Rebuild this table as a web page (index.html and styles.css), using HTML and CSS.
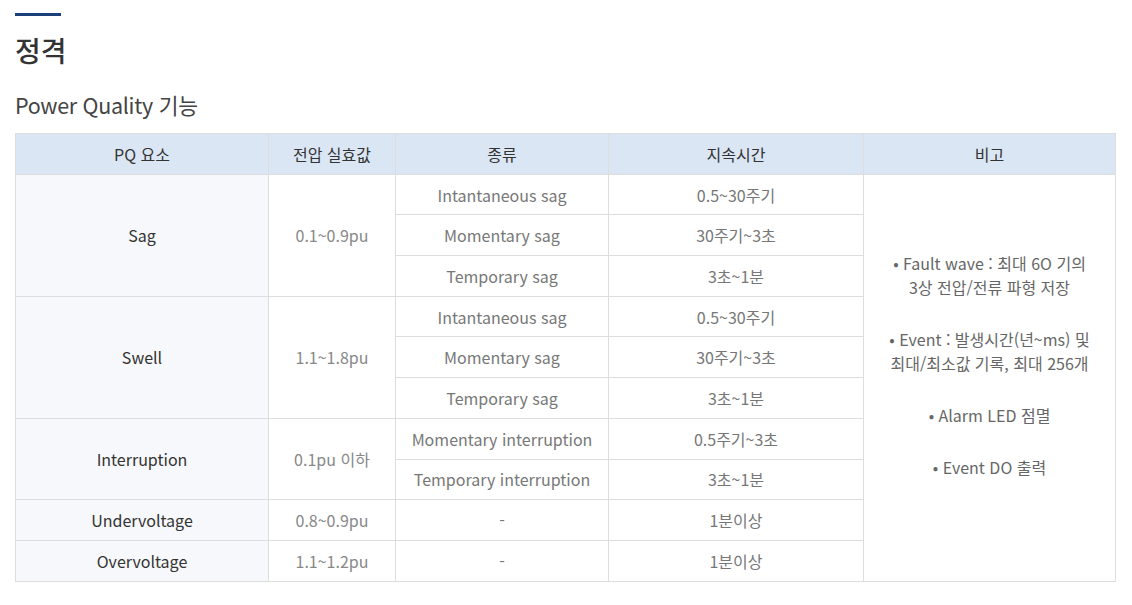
FILE: index.html
```html
<!DOCTYPE html>
<html lang="ko">
<head>
<meta charset="utf-8">
<link rel="stylesheet" href="styles.css">
</head>
<body>
<div class="page">
  <div class="bar"></div>
  <h2 class="title">정격</h2>
  <h3 class="subtitle">Power Quality 기능</h3>
  <table class="spec">
    <colgroup>
      <col class="c1"><col class="c2"><col class="c3"><col class="c4"><col class="c5">
    </colgroup>
    <thead>
      <tr><th>PQ 요소</th><th>전압 실효값</th><th>종류</th><th>지속시간</th><th>비고</th></tr>
    </thead>
    <tbody>
      <tr><td class="name" rowspan="3">Sag</td><td class="val" rowspan="3">0.1~0.9pu</td><td>Intantaneous sag</td><td>0.5~30주기</td>
        <td class="note" rowspan="10">
          <p>• Fault wave : 최대 6O 기의<br>3상 전압/전류 파형 저장</p>
          <p>• Event : 발생시간(년~ms) 및<br>최대/최소값 기록, 최대 256개</p>
          <p>• Alarm LED 점멸</p>
          <p>• Event DO 출력</p>
        </td></tr>
      <tr><td>Momentary sag</td><td>30주기~3초</td></tr>
      <tr><td>Temporary sag</td><td>3초~1분</td></tr>
      <tr><td class="name" rowspan="3">Swell</td><td class="val" rowspan="3">1.1~1.8pu</td><td>Intantaneous sag</td><td>0.5~30주기</td></tr>
      <tr><td>Momentary sag</td><td>30주기~3초</td></tr>
      <tr><td>Temporary sag</td><td>3초~1분</td></tr>
      <tr><td class="name" rowspan="2">Interruption</td><td class="val" rowspan="2">0.1pu 이하</td><td>Momentary interruption</td><td>0.5주기~3초</td></tr>
      <tr><td>Temporary interruption</td><td>3초~1분</td></tr>
      <tr><td class="name">Undervoltage</td><td class="val">0.8~0.9pu</td><td>-</td><td>1분이상</td></tr>
      <tr><td class="name">Overvoltage</td><td class="val">1.1~1.2pu</td><td>-</td><td>1분이상</td></tr>
    </tbody>
  </table>
</div>
</body>
</html>
```
FILE: styles.css
```css
html, body {
  margin: 0;
  padding: 0;
  background: #fff;
}
body {
  font-family: "Noto Sans CJK KR", "Noto Sans", sans-serif;
  color: #333;
}
.page {
  padding: 13px 18px 0 15px;
}
.bar {
  width: 46px;
  height: 3px;
  background: #1a3f7a;
}
.title {
  margin: 15px 0 0;
  font-size: 28px;
  line-height: 38px;
  font-weight: 500;
  color: #333;
}
.subtitle {
  margin: 21px 0 0;
  font-size: 21.5px;
  line-height: 30px;
  font-weight: 400;
  color: #444;
  letter-spacing: -0.3px;
}
.spec {
  margin-top: 13px;
  width: 1100px;
  border-collapse: collapse;
  table-layout: fixed;
  font-size: 16px;
}
.c1 { width: 253px; }
.c2 { width: 127px; }
.c3 { width: 213px; }
.c4 { width: 255px; }
.c5 { width: 252px; }
.spec th, .spec td {
  border: 1px solid #dddddd;
  text-align: center;
  vertical-align: middle;
  height: 39.7px;
  padding: 0;
}
.spec th {
  background: #dbe6f5;
  font-weight: 400;
  color: #333;
}
.spec td {
  color: #777;
}
.spec td.val {
  color: #888;
}
.spec td.name {
  background: #f7f8fb;
  color: #333;
}
.spec td.note {
  color: #666;
  line-height: 24px;
  padding-bottom: 26px;
}
.note p {
  margin: 0 0 28px;
}
.note p:last-child {
  margin-bottom: 0;
}
```
